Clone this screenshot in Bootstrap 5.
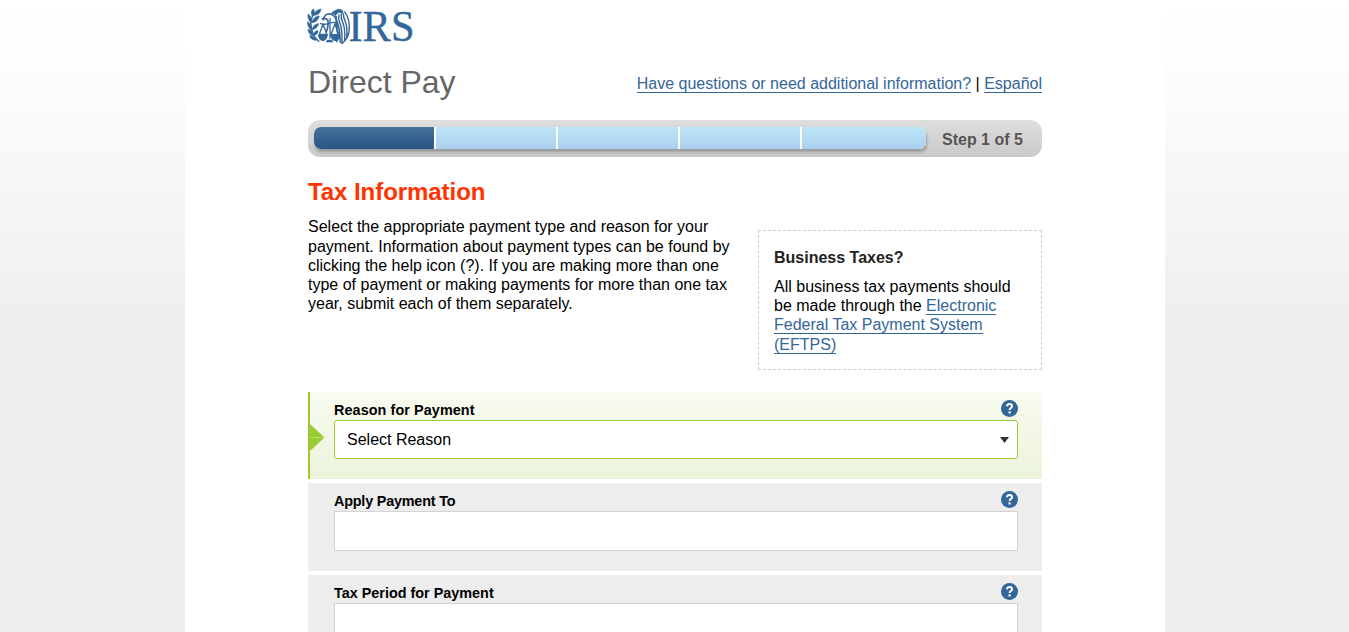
<!DOCTYPE html>
<html lang="en">
<head>
<meta charset="utf-8">
<title>IRS Direct Pay</title>
<link href="https://cdn.jsdelivr.net/npm/bootstrap@5.3.0/dist/css/bootstrap.min.css" rel="stylesheet">
<style>
html{overflow:hidden}
body{font:16px/19.2px "Liberation Sans",Arial,sans-serif;color:#000;background:#ededed linear-gradient(#fff 0,#fefefe 45px,#f0f0f0 300px,#efefef 306px) no-repeat 0 0/100% 306px;height:632px;overflow:hidden;padding-left:1px}
.sheet{width:980px;height:632px;padding:0 123px;overflow:hidden}
.logo{display:block;height:55px;width:125px;margin-left:-8px}
.site-name{font-size:32px;line-height:38px;color:#666;font-weight:400}
.sheet a{color:#369;text-decoration:none;border-bottom:1px solid #369}
.top-row{height:65px;padding-top:8px}
.help-links{padding-top:11px}
.steps{height:37px;border-radius:12px;background:linear-gradient(#dedede,#c9c9c9);padding:7px 0 0 6px}
.step-track{width:612px;height:22px;border-radius:7px;overflow:hidden;gap:2px;background:#fff}
.track-shadow{border-radius:7px;height:22px;box-shadow:1px 3px 3px rgba(0,0,0,.25)}
.step-part{width:120px;background:linear-gradient(#bce7f7,#abceef)}
.step-part.done{background:linear-gradient(#457299,#2a5485)}
.step-text{color:#555;padding:3px 0 0 16px}
.page-title{font-size:24px;line-height:29px;color:#f30;margin:20px 0 0;letter-spacing:-.06px}
.intro{height:175px;margin-top:11px}
.intro-text{width:440px;padding-top:.4px}
.biz{width:284px;height:140px;margin-top:13px;padding:17px 20px 0 15px;border:1px dashed #ccc}
.biz h3{font-size:16px;line-height:19px;color:#222;margin-bottom:10px}
.field-row{height:88px;background:#ededed;padding:8px 24px 0 26px;margin-bottom:4px}
.field-row label{font-size:14.4px;line-height:20px;height:20px}
.label-wide{letter-spacing:.08px}
.label-tight{letter-spacing:-.2px}
.field-row.current{height:87px;background:linear-gradient(#f8fbf0,#ecf3db);border-left:2px solid #9c3;padding-left:24px}
.field-row .form-control{height:40px;border:1px solid #d3d3d3;border-radius:0;padding:0}
.field-row .pick{height:39px;border:1px solid #9c3;border-radius:3px;background:#fff;padding:0 8px 0 12px}
.pointer{left:0;top:32px}
.help{width:17px;height:17px}
</style>
</head>
<body>
<main class="sheet bg-white mx-auto">
<svg class="logo" viewBox="0 0 125 55" role="img" aria-label="IRS">
<g transform="translate(5 5) scale(.33333)" fill="none" stroke="#369" stroke-width="4">
<path d="M40 16Q15 30 18 62Q21 94 43 110" stroke-width="4"/>
<g fill="#369" stroke="#369" stroke-width="2">
<path d="M22 34Q15 18 25 12Q33 23 22 34ZM27 31Q31 15 48 12Q46 30 27 31ZM18 54Q6 40 9 27Q23 36 18 54ZM20 53Q27 33 43 33Q38 52 20 53ZM18 75Q6 63 8 50Q21 57 18 75ZM21 74Q26 56 41 56Q36 72 21 74ZM23 92Q9 86 9 73Q23 76 23 92ZM25 91Q27 77 39 77Q39 90 25 91ZM34 106Q17 105 14 92Q29 92 34 106Z"/>
<path d="M88 18Q102 7 114 18L112 27L105 22Q97 21 92 32Q88 25 78 26Q82 20 88 18Z"/>
</g>
<path d="M55 46Q57 25 76 27Q94 33 94 50Q94 76 101 97L94 111M50 43Q63 36 69 47Q70 73 62 82M94 33Q91 42 97 53L103 75L106 109" stroke-width="5"/>
<path d="M102 28Q99 42 104 53Q112 69 111 111M109 27Q107 42 113 52Q121 69 119 105M115 25Q115 39 121 50Q128 66 125 96M118 19Q137 42 132 81Q128 101 112 115L104 110" stroke-width="4.2"/>
<path d="M75 40V101M45 55Q60 61 75 54Q88 49 99 56M54 58L43 88H66ZM90 56L78 89H101Z" stroke-width="4"/>
<path d="M38 90H69Q64 108 54 108Q43 108 38 90ZM76 90H105Q101 108 91 108Q80 108 76 90ZM67 104H81L85 112H62Z" fill="#369" stroke="none"/>
</g>
<text x="48.5" y="41" font-family="Liberation Serif" font-size="44" textLength="66" lengthAdjust="spacingAndGlyphs" fill="#369" stroke="#369" stroke-width=".4">IRS</text>
</svg>
<header class="top-row d-flex justify-content-between">
<h1 class="site-name m-0">Direct Pay</h1>
<div class="help-links"><a href="#">Have questions or need additional information?</a> | <a href="#">Español</a></div>
</header>
<div class="steps d-flex">
<div class="track-shadow"><div class="step-track d-flex">
<div class="step-part done"></div><div class="step-part"></div><div class="step-part"></div><div class="step-part"></div><div class="step-part flex-grow-1"></div>
</div></div>
<strong class="step-text">Step 1 of 5</strong>
</div>
<h2 class="page-title fw-bold">Tax Information</h2>
<section class="intro d-flex justify-content-between">
<p class="intro-text m-0">Select the appropriate payment type and reason for your<br>payment. Information about payment types can be found by<br>clicking the help icon (?). If you are making more than one<br>type of payment or making payments for more than one tax<br>year, submit each of them separately.</p>
<aside class="biz"><h3 class="fw-bold">Business Taxes?</h3>
<p class="m-0">All business tax payments should be made through the <a href="#">Electronic Federal Tax Payment System (EFTPS)</a></p></aside>
</section>
<svg class="d-none"><symbol id="help" viewBox="0 0 17 17"><circle cx="8.5" cy="8.5" r="8.5" fill="#369"/><path d="M5.9 6.2Q6.3 4.1 8.6 4.1Q11 4.1 11 6.2Q11 7.3 9.7 8.1Q8.6 8.8 8.6 10" fill="none" stroke="#fff" stroke-width="2"/><path d="M7.5 11.3h2.2v2.2H7.5z" fill="#fff"/></symbol></svg>
<form>
<div class="field-row current position-relative">
<svg class="pointer position-absolute" width="15" height="28"><path d="M0 0L14.5 13.5L0 27Z" fill="#9c3"/><path d="M0 13.5H14" stroke="#b5dc6c"/></svg>
<div class="d-flex justify-content-between"><label class="fw-bold label-wide">Reason for Payment</label><svg class="help"><use href="#help"/></svg></div>
<div class="pick d-flex align-items-center justify-content-between">Select Reason<svg width="9" height="6"><path d="M0 0H9L4.5 6Z" fill="#333"/></svg></div>
</div>
<div class="field-row">
<div class="d-flex justify-content-between"><label class="fw-bold label-tight" for="apply">Apply Payment To</label><svg class="help"><use href="#help"/></svg></div>
<input class="form-control" id="apply">
</div>
<div class="field-row">
<div class="d-flex justify-content-between"><label class="fw-bold" for="period">Tax Period for Payment</label><svg class="help"><use href="#help"/></svg></div>
<input class="form-control" id="period">
</div>
</form>
</main>
<script src="https://cdn.jsdelivr.net/npm/bootstrap@5.3.0/dist/js/bootstrap.bundle.min.js"></script>
</body>
</html>
